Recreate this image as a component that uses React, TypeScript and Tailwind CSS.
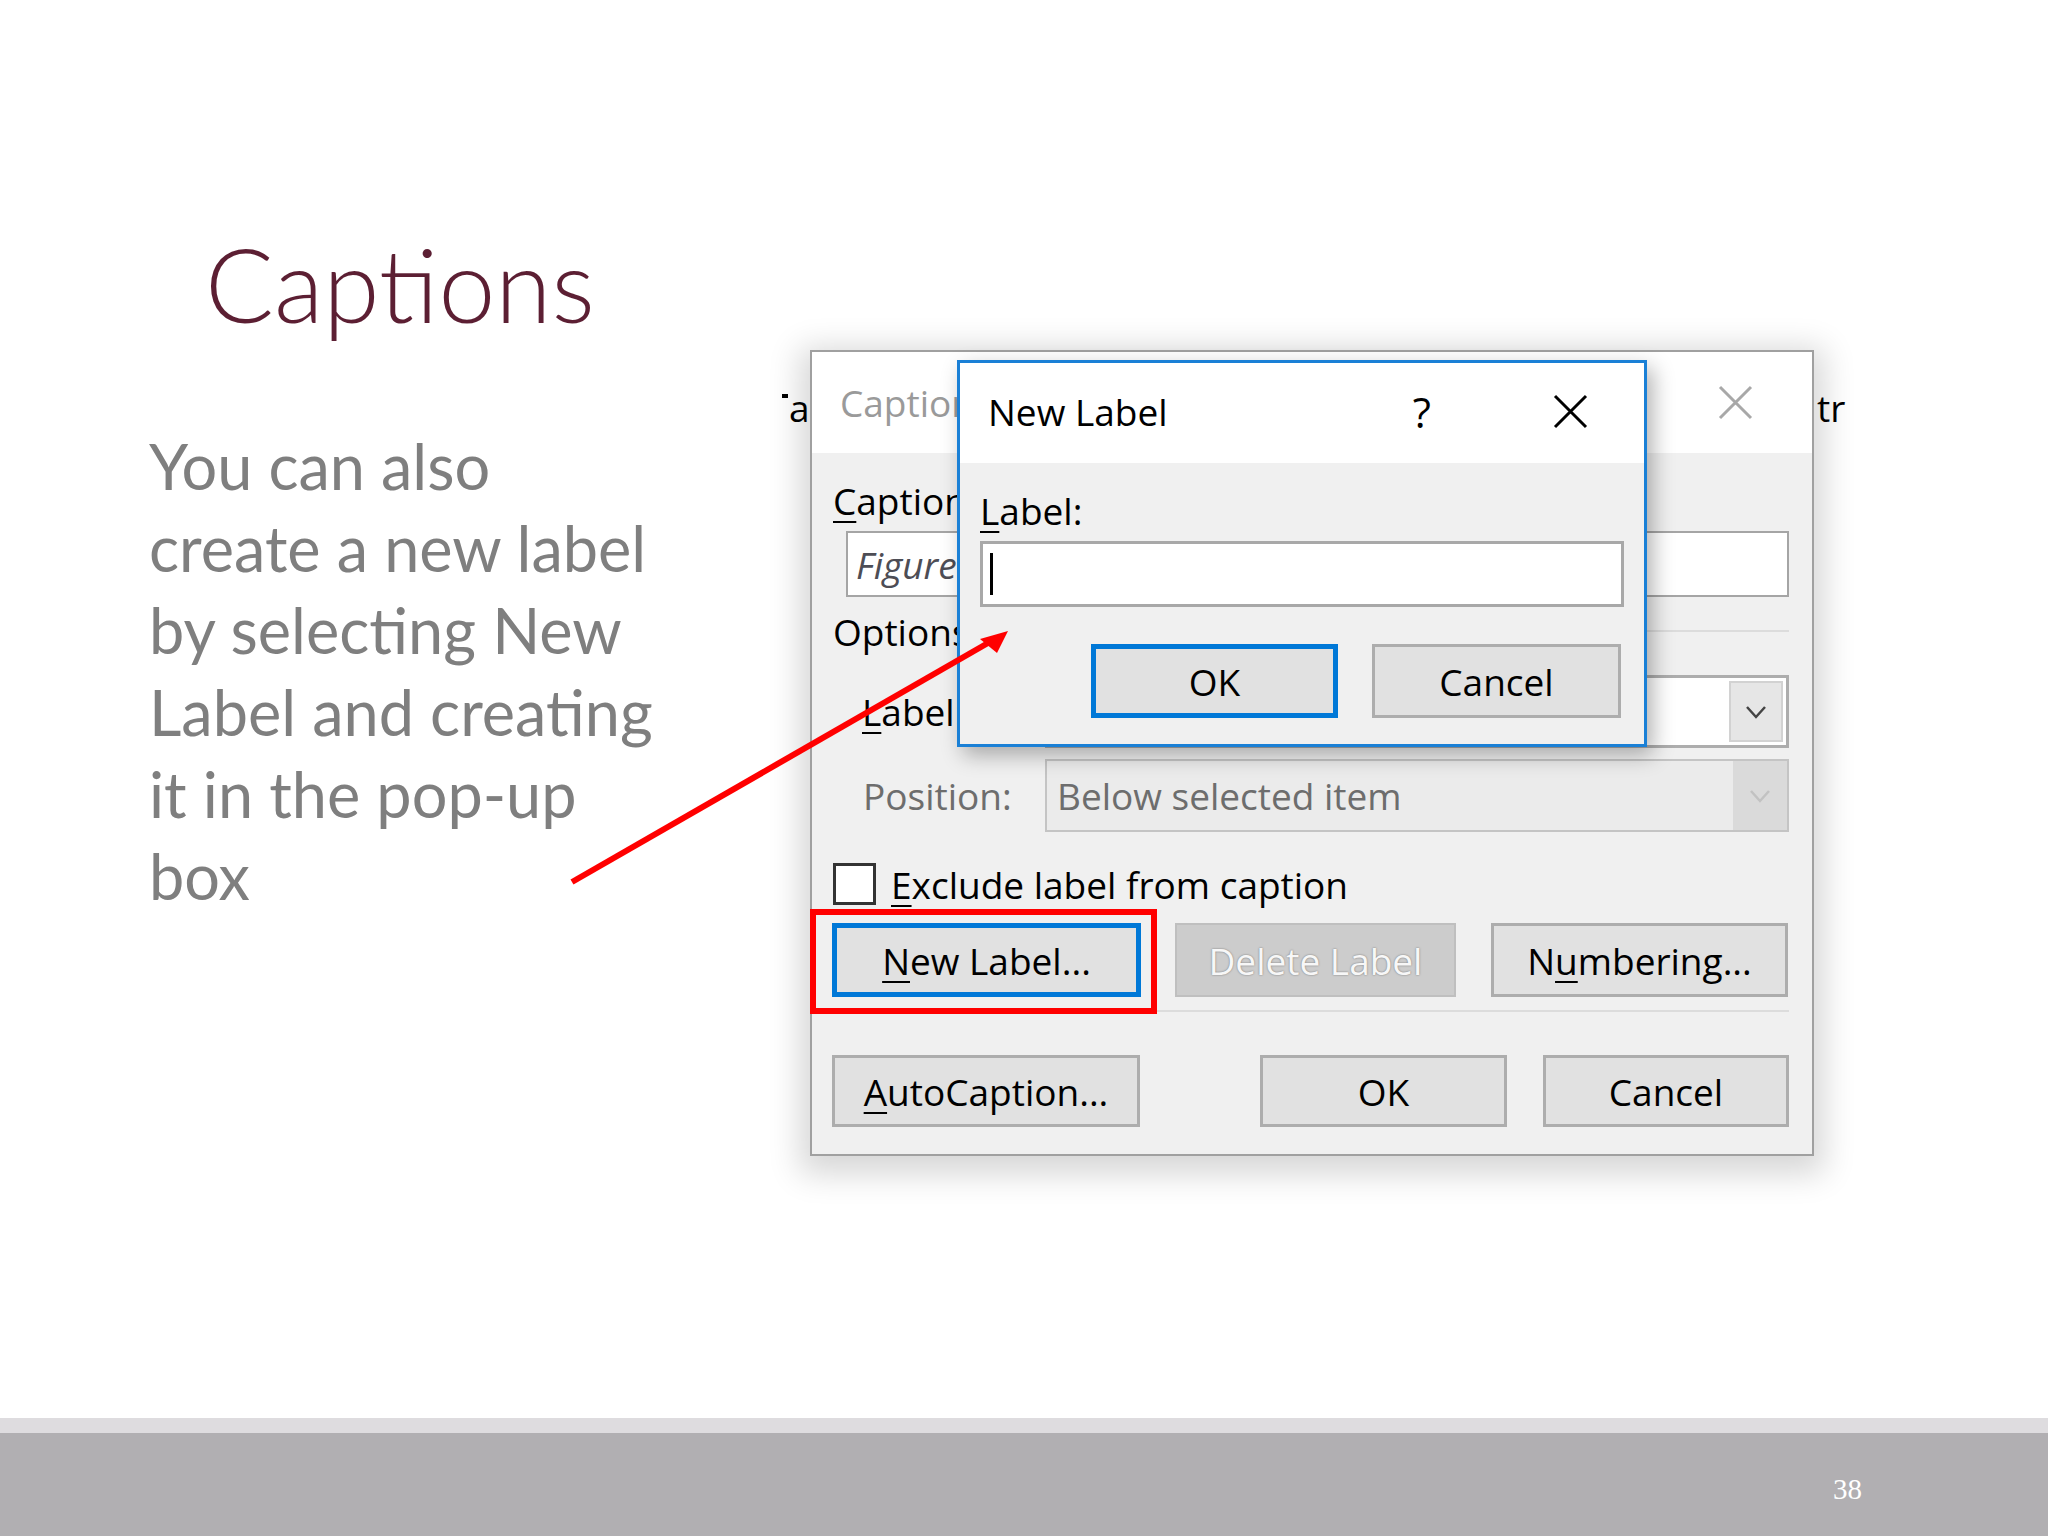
import React from "react";

const ui = "font-['Open_Sans','Noto_Sans',sans-serif]";

function U({ children }: { children: React.ReactNode }) {
  return <span className="underline decoration-2 underline-offset-[6px]">{children}</span>;
}

function Chevron({ color = "#333" }: { color?: string }) {
  return (
    <svg width="22" height="14" viewBox="0 0 22 14" fill="none">
      <polyline points="2,2 11,12 20,2" stroke={color} strokeWidth="2.5" />
    </svg>
  );
}

function CloseIcon({ color }: { color: string }) {
  return (
    <svg width="35" height="35" viewBox="0 0 35 35" fill="none">
      <path d="M2 2 L33 33 M33 2 L2 33" stroke={color} strokeWidth="3" />
    </svg>
  );
}

type BtnProps = {
  children: React.ReactNode;
  w: string;
  h?: string;
  kind?: "default" | "focus" | "disabled";
};

function Btn({ children, w, h = "h-[74px]", kind = "default" }: BtnProps) {
  const look =
    kind === "focus"
      ? "border-[5px] border-[#0078d7] bg-[#e1e1e1] text-black"
      : kind === "disabled"
      ? "border-2 border-[#bfbfbf] bg-[#cccccc] text-[#f7f7f7] [text-shadow:0_0_2px_#6e6e6e]"
      : "border-[3px] border-[#adadad] bg-[#e1e1e1] text-black";
  return <div className={`${w} ${h} ${look} flex items-center justify-center shrink-0`}>{children}</div>;
}

function Dropdown({ text, disabled }: { text?: string; disabled?: boolean }) {
  return (
    <div
      className={`flex-1 h-full flex ${
        disabled ? "border-2 border-[#c4c4c4] bg-[#ebebeb]" : "border-[3px] border-[#adadad] bg-white p-[3px]"
      }`}
    >
      <div className="flex-1 flex items-center pl-[10px] text-[#6d6d6d]">{text}</div>
      <div
        className={`w-[54px] flex items-center justify-center ${
          disabled ? "bg-[#dadada]" : "bg-[#e6e6e6] border-2 border-[#d2d2d2]"
        }`}
      >
        <Chevron color={disabled ? "#c2c2c2" : "#444"} />
      </div>
    </div>
  );
}

function NewLabelDialog() {
  return (
    <div className="absolute left-[145px] top-[8px] w-[690px] h-[387px] border-[3px] border-[#1a80d6] bg-[#f0f0f0] shadow-[6px_8px_20px_rgba(0,0,0,0.3)] flex flex-col">
      <div className="h-[100px] bg-white flex items-center pl-[28px] pr-[56px] pb-[3px]">
        <span className="flex-1">New Label</span>
        <span className="mr-[122px] text-[42px]">?</span>
        <CloseIcon color="#000" />
      </div>
      <div className="px-[20px] pt-[28px] flex flex-col">
        <div className="h-[38px] flex items-center">
          <span>
            <U>L</U>abel:
          </span>
        </div>
        <div className="mt-[12px] h-[66px] border-[3px] border-[#a8a8a8] bg-white flex items-center pl-[7px]">
          <div className="w-[3px] h-[42px] bg-black" />
        </div>
        <div className="mt-[37px] flex justify-end gap-[34px] pr-[3px]">
          <Btn w="w-[247px]" kind="focus">OK</Btn>
          <Btn w="w-[249px]">Cancel</Btn>
        </div>
      </div>
    </div>
  );
}

function CaptionDialog() {
  return (
    <div
      className={`relative w-[1004px] h-[806px] border-2 border-[#a0a0a0] bg-[#f0f0f0] shadow-[0_8px_30px_10px_rgba(0,0,0,0.16)] ${ui} text-[37px] leading-none text-black`}
    >
      {/* bits of the ribbon behind the dialog */}
      <div className="absolute -left-[30px] top-[36px] h-[38px] flex items-center">
        <div className="w-[6px] h-[4px] bg-black -mt-[22px] mr-[1px]" />
        <span>a</span>
      </div>
      <div className="absolute left-[1005px] top-[36px] h-[38px] flex items-center">
        <span>tr</span>
      </div>

      <div className="h-[101px] bg-white flex items-center justify-between pl-[28px] pr-[59px]">
        <span className="text-[#9a9a9a]">Caption</span>
        <CloseIcon color="#a8a8a8" />
      </div>

      <div className="pl-[21px] pr-[23px] pt-[28px] flex flex-col">
        <div className="h-[38px] flex items-center">
          <span>
            <U>C</U>aption:
          </span>
        </div>
        <div className="mt-[12px] ml-[13px] h-[66px] border-2 border-[#a5a5a5] bg-white flex items-center pl-[8px] italic text-[#4d4d55]">
          Figure 1
        </div>
        <div className="mt-[15px] h-[38px] flex items-center gap-[12px]">
          <span>Options</span>
          <div className="flex-1 h-[2px] bg-[#dcdcdc]" />
        </div>
        <div className="mt-[25px] h-[73px] flex items-center">
          <span className="w-[212px] pl-[29px]">
            <U>L</U>abel:
          </span>
          <Dropdown />
        </div>
        <div className="mt-[11px] h-[73px] flex items-center">
          <span className="w-[212px] pl-[30px] text-[#6d6d6d]">Position:</span>
          <Dropdown text="Below selected item" disabled />
        </div>
        <div className="mt-[31px] h-[42px] flex items-center">
          <div className="w-[43px] h-[42px] border-[3px] border-[#333] bg-white" />
          <span className="ml-[15px]">
            <U>E</U>xclude label from caption
          </span>
        </div>
        <div className="mt-[18px] flex -ml-[1px]">
          <Btn w="w-[309px]" kind="focus">
            <span>
              <U>N</U>ew Label...
            </span>
          </Btn>
          <div className="ml-[34px]">
            <Btn w="w-[281px]" kind="disabled">Delete Label</Btn>
          </div>
          <div className="ml-[35px]">
            <Btn w="w-[297px]">
              <span>
                N<U>u</U>mbering...
              </span>
            </Btn>
          </div>
        </div>
        <div className="mt-[13px] h-[2px] bg-[#dcdcdc]" />
        <div className="mt-[43px] flex justify-between -ml-[1px]">
          <Btn w="w-[308px]" h="h-[72px]">
            <span>
              <U>A</U>utoCaption...
            </span>
          </Btn>
          <div className="flex gap-[36px]">
            <Btn w="w-[247px]" h="h-[72px]">OK</Btn>
            <Btn w="w-[246px]" h="h-[72px]">Cancel</Btn>
          </div>
        </div>
      </div>

      {/* red highlight around New Label... */}
      <div className="absolute -left-[2px] top-[557px] w-[347px] h-[105px] border-[6px] border-[#ff0000]" />

      <NewLabelDialog />
    </div>
  );
}

export default function App() {
  return (
    <div className="relative w-[2048px] h-[1536px] bg-white overflow-hidden flex flex-col">
      <div className="flex h-[1418px]">
        <div className="w-[810px] shrink-0 pl-[149px] pt-[233px] font-['Lato',sans-serif]">
          <h1 className="ml-[56px] font-light text-[102px] leading-[102px] text-[#5c1f33]">Captions</h1>
          <p className="mt-[90px] text-[63px] leading-[82px] text-[#7f7f7f] whitespace-nowrap">
            You can also
            <br />
            create a new label
            <br />
            by selecting New
            <br />
            Label and creating
            <br />
            it in the pop-up
            <br />
            box
          </p>
        </div>
        <div className="pt-[350px]">
          <CaptionDialog />
        </div>
      </div>

      <div className="h-[118px] flex flex-col">
        <div className="h-[15px] bg-[#dedcdf]" />
        <div className="flex-1 bg-[#b1afb2] flex items-center justify-end pr-[186px] pt-[10px]">
          <span className="font-['Liberation_Serif',serif] text-[29px] text-white">38</span>
        </div>
      </div>

      {/* red arrow pointing at the new label box */}
      <svg className="absolute left-0 top-0 pointer-events-none" width="2048" height="1536">
        <line x1="572" y1="882" x2="988" y2="643" stroke="#ff0000" strokeWidth="6" />
        <polygon points="1008,631 980,639 997,653" fill="#ff0000" />
      </svg>
    </div>
  );
}
